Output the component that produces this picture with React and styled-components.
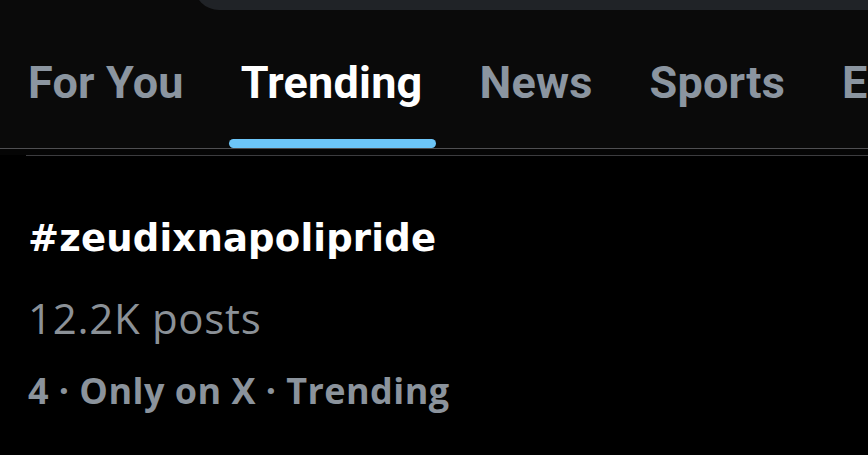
import React from 'react';
import styled, { createGlobalStyle } from 'styled-components';

const GlobalStyle = createGlobalStyle`
  html, body {
    margin: 0;
    padding: 0;
    background: #000;
  }
  body {
    font-family: "Open Sans", "Liberation Sans", sans-serif;
    -webkit-font-smoothing: antialiased;
  }
`;

const Screen = styled.div`
  width: 868px;
  height: 455px;
  overflow: hidden;
  background: #000;
`;

const Header = styled.div`
  background: #0a0a0a;
`;

const SearchEdge = styled.div`
  height: 10px;
  overflow: hidden;
`;

const SearchBar = styled.div`
  height: 50px;
  margin-top: -40px;
  margin-left: 194px;
  background: #202327;
  border-radius: 40px 0 0 40px;
`;

const TabBar = styled.nav`
  display: flex;
  gap: 57px;
  padding: 47px 0 0 28px;
  border-bottom: 1px solid #4f4f52;
  white-space: nowrap;
  overflow: hidden;
`;

const Tab = styled.div`
  display: flex;
  flex-direction: column;
  flex-shrink: 0;
`;

const TabLabel = styled.span`
  font-family: Roboto, "Liberation Sans", sans-serif;
  font-size: 45px;
  line-height: 52px;
  letter-spacing: 0.2px;
  font-weight: 700;
  color: ${p => (p.$active ? '#ffffff' : '#8b95a0')};
`;

const Indicator = styled.div`
  height: 9px;
  margin: 30px -13px 0 -12px;
  border-radius: 5px;
  background: ${p => (p.$active ? '#6cc5f8' : 'transparent')};
`;

const SubLine = styled.div`
  height: 6px;
  background: #050505;
  display: flex;
`;

const LineGap = styled.div`
  width: 26px;
  flex-shrink: 0;
`;

const LineRule = styled.div`
  flex: 1;
  border-bottom: 1px solid #3c3c3f;
  margin-top: 6px;
`;

const Trend = styled.section`
  padding: 61px 28px 0;
  display: flex;
  flex-direction: column;
`;

const Title = styled.div`
  font-family: "DejaVu Sans", "Open Sans", sans-serif;
  font-size: 37px;
  line-height: 46px;
  letter-spacing: 0.2px;
  font-weight: 700;
  color: #ffffff;
`;

const Posts = styled.div`
  margin-top: 31px;
  font-size: 42px;
  line-height: 50px;
  letter-spacing: 0.7px;
  font-weight: 400;
  color: #8b9197;
`;

const Meta = styled.div`
  margin-top: 26px;
  font-size: 36px;
  line-height: 44px;
  letter-spacing: 0.45px;
  font-weight: 700;
  color: #8b939c;
`;

const tabs = ['For You', 'Trending', 'News', 'Sports', 'Entertainment'];

export default function App() {
  return (
    <Screen>
      <GlobalStyle />
      <Header>
        <SearchEdge>
          <SearchBar />
        </SearchEdge>
        <TabBar>
          {tabs.map(t => (
            <Tab key={t}>
              <TabLabel $active={t === 'Trending'}>{t}</TabLabel>
              <Indicator $active={t === 'Trending'} />
            </Tab>
          ))}
        </TabBar>
      </Header>
      <SubLine>
        <LineGap />
        <LineRule />
      </SubLine>
      <Trend>
        <Title>#zeudixnapolipride</Title>
        <Posts>12.2K posts</Posts>
        <Meta>4 · Only on X · Trending</Meta>
      </Trend>
    </Screen>
  );
}
